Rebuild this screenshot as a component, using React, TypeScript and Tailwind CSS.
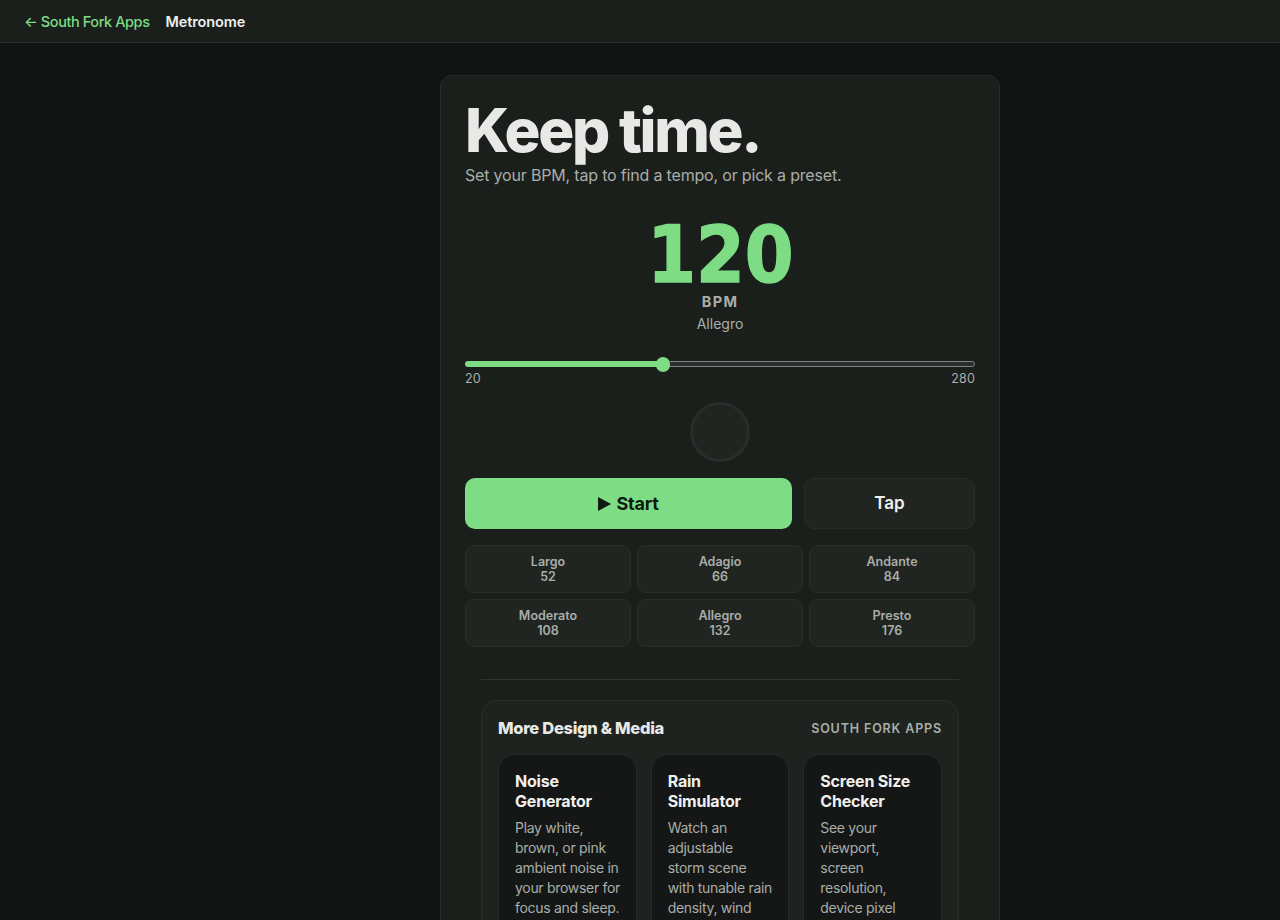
const presets = [
  { name: "Largo", bpm: 52 },
  { name: "Adagio", bpm: 66 },
  { name: "Andante", bpm: 84 },
  { name: "Moderato", bpm: 108 },
  { name: "Allegro", bpm: 132 },
  { name: "Presto", bpm: 176 },
];

const apps = [
  {
    title: ["Noise", "Generator"],
    lines: ["Play white,", "brown, or pink", "ambient noise in", "your browser for", "focus and sleep."],
  },
  {
    title: ["Rain", "Simulator"],
    lines: ["Watch an", "adjustable", "storm scene", "with tunable rain", "density, wind"],
  },
  {
    title: ["Screen Size", "Checker"],
    lines: ["See your", "viewport,", "screen", "resolution,", "device pixel"],
  },
];

export default function App() {
  return (
    <div className="h-screen overflow-hidden bg-[#111412] font-['Inter',sans-serif] text-[#e8e8e6]">
      <header className="flex h-[43px] items-center gap-4 border-b border-[#2a302b] bg-[#1b1f1c] px-6 pt-[1px]">
        <a className="text-[14.5px] font-medium tracking-[-0.42px] text-[#7ddc84]">← South Fork Apps</a>
        <span className="text-[14.5px] font-semibold tracking-[-0.12px] text-[#f0f0ee]">Metronome</span>
      </header>

      <main className="ml-[440px] w-[560px] pt-8">
        <section className="rounded-xl border border-[#282d29] bg-[#1b1f1c] px-6 pt-6">
          <h1 className="text-[60px] leading-[60px] font-extrabold tracking-[-2.3px] text-[#e8e8e6]">Keep time.</h1>
          <p className="mt-[3px] text-[16px] leading-6 tracking-[-0.18px] text-[#a9aea9]">
            Set your BPM, tap to find a tempo, or pick a preset.
          </p>

          <div className="mt-[37px] flex flex-col items-center">
            <div className="scale-x-[0.9] font-['DejaVu_Sans',sans-serif] text-[78px] leading-[62px] font-bold text-[#7ddc84] [-webkit-text-stroke:1.5px_#7ddc84]">
              120
            </div>
            <div className="mt-[6px] text-[14.5px] leading-5 font-bold tracking-[1.3px] text-[#a9aea9]">BPM</div>
            <div className="mt-[2px] text-[14px] leading-5 text-[#a9aea9]">Allegro</div>
          </div>

          <div className="mt-[22px] flex h-4 items-center">
            <div className="h-[6px] w-[198px] rounded-l-full bg-[#7ddc84]" />
            <div className="z-10 -mx-[7px] h-[15px] w-[14px] shrink-0 rounded-full bg-[#7ddc84]" />
            <div className="h-[6px] flex-1 rounded-r-full border-[1.5px] border-[#7f827f] bg-[#2a2d2b]" />
          </div>
          <div className="flex justify-between text-[12.5px] leading-[14px] tracking-[0.2px] text-[#a9aea9]">
            <span>20</span>
            <span>280</span>
          </div>

          <div className="mt-4 flex justify-center">
            <div className="h-[60px] w-[60px] rounded-full border-[3px] border-[#282d29] bg-[#212522]" />
          </div>

          <div className="mt-4 flex gap-3">
            <button className="flex h-[51px] flex-1 items-center justify-center gap-[5px] rounded-[10px] bg-[#7ddc84] text-[18px] font-bold tracking-[-0.2px] text-[#0f1a10]">
              <svg width="13" height="14" viewBox="0 0 13 14" fill="currentColor" aria-hidden="true">
                <polygon points="0,0 13,7 0,14" />
              </svg>
              Start
            </button>
            <button className="h-[51px] w-[171px] rounded-[10px] border border-[#282d29] bg-[#212522] pt-[1px] text-[17px] font-semibold text-[#f0f0ee]">
              Tap
            </button>
          </div>

          <div className="mt-4 grid grid-cols-3 gap-[6px]">
            {presets.map((preset) => (
              <button
                key={preset.name}
                className="h-[48px] rounded-lg border border-[#282d29] bg-[#212522] text-[12.5px] leading-[15px] font-semibold text-[#a9aea9]"
              >
                {preset.name}
                <br />
                {preset.bpm}
              </button>
            ))}
          </div>

          <div className="mx-4 mt-8 border-t border-[#2f3530]" />

          <div className="mx-4 mt-5 rounded-2xl border border-[#282d29] bg-[#1f2320] px-4 pt-[15px]">
            <div className="flex items-center justify-between">
              <h2 className="text-[16.5px] leading-6 font-extrabold tracking-[-0.3px] text-[#e8e8e6]">More Design &amp; Media</h2>
              <span className="mt-[2px] text-[12.5px] font-semibold tracking-[0.85px] text-[#a9aea9]">SOUTH FORK APPS</span>
            </div>
            <div className="mt-[14px] grid grid-cols-3 gap-[14px]">
              {apps.map((app) => (
                <div key={app.title[0]} className="rounded-2xl border border-[#282d29] bg-[#141715] px-4 pt-4 pb-6">
                  <h3 className="text-[16px] leading-5 font-bold tracking-[-0.2px] text-[#f0f0ee]">
                    {app.title[0]}
                    <br />
                    {app.title[1]}
                  </h3>
                  <p className="mt-[7px] text-[14px] leading-5 tracking-[-0.3px] whitespace-nowrap text-[#a9aea9]">
                    {app.lines.map((line) => (
                      <span key={line} className="block">
                        {line}
                      </span>
                    ))}
                  </p>
                </div>
              ))}
            </div>
          </div>
        </section>
      </main>
    </div>
  );
}
